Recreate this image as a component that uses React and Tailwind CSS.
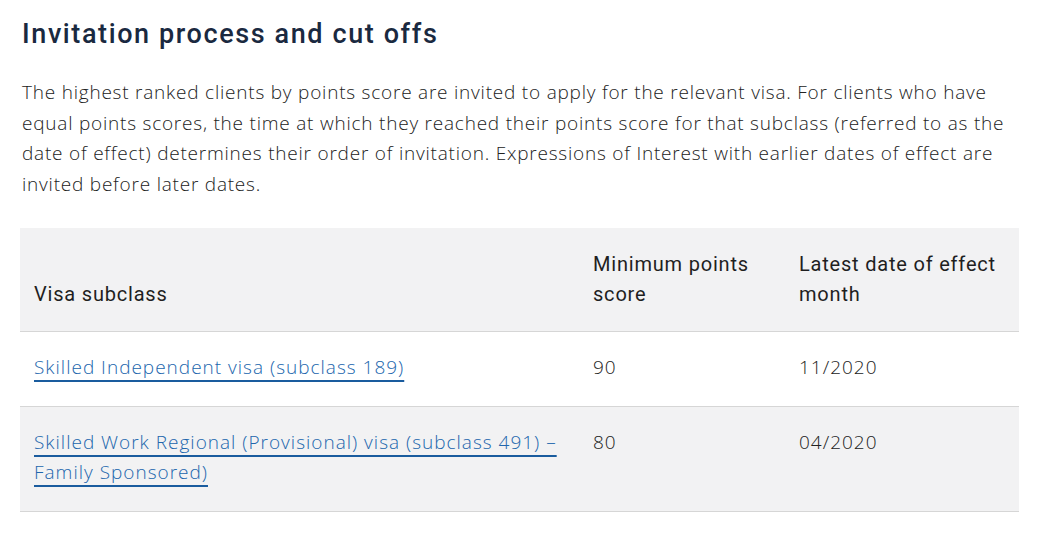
import React from 'react';

const rows = [
  { visa: 'Skilled Independent visa (subclass 189)', score: '90', date: '11/2020', shaded: false },
  {
    visa: 'Skilled Work Regional (Provisional) visa (subclass 491) – Family Sponsored)',
    score: '80',
    date: '04/2020',
    shaded: true,
  },
];

const App = () => {
  return (
    <div className="w-[1042px] h-[542px] bg-white overflow-hidden px-[20px]">
      <h2 className="pl-[2px] pt-[14px] text-[27px] leading-[40px] font-medium tracking-[1.6px] text-[#1a2940] font-['Roboto',sans-serif]">
        Invitation process and cut offs
      </h2>

      <p className="mt-[23px] pl-[2px] w-[1000px] text-[19px] leading-[30.5px] font-light tracking-[0.78px] text-[#222] font-['Open_Sans',sans-serif]">
        The highest ranked clients by points score are invited to apply for the relevant visa. For clients who have
        <br />
        equal points scores, the time at which they reached their points score for that subclass (referred to as the
        <br />
        date of effect) determines their order of invitation. Expressions of Interest with earlier dates of effect are
        <br />
        invited before later dates.
      </p>

      <table className="mt-[29px] w-[999px] border-collapse text-left">
        <thead>
          <tr className="bg-[#f2f2f3] border-b border-[#d6d6d6]">
            <th className="w-[559px] px-[14px] pt-[21px] pb-[22px] align-bottom text-[20px] leading-[30px] font-normal tracking-[0.8px] text-[#1f1f1f] font-['Roboto',sans-serif]">
              Visa subclass
            </th>
            <th className="w-[206px] px-[14px] pt-[21px] pb-[22px] align-bottom text-[20px] leading-[30px] font-normal tracking-[0.8px] text-[#1f1f1f] font-['Roboto',sans-serif]">
              Minimum points score
            </th>
            <th className="px-[14px] pt-[21px] pb-[22px] align-bottom text-[20px] leading-[30px] font-normal tracking-[0.8px] text-[#1f1f1f] font-['Roboto',sans-serif]">
              Latest date of effect month
            </th>
          </tr>
        </thead>
        <tbody className="font-['Open_Sans',sans-serif] text-[19px] leading-[30px] font-light tracking-[1px]">
          {rows.map((row, idx) => (
            <tr key={idx} className={`border-b border-[#d6d6d6] ${row.shaded ? 'bg-[#f2f2f3]' : 'bg-white'}`}>
              <td className="px-[14px] pt-[20px] pb-[24px] align-top">
                <a
                  href="#"
                  className="text-[#2166ad] underline decoration-[#1a5c9e] decoration-2 underline-offset-[6px]"
                >
                  {row.visa}
                </a>
              </td>
              <td className="px-[14px] pt-[20px] pb-[24px] align-top text-[#222]">{row.score}</td>
              <td className="px-[14px] pt-[20px] pb-[24px] align-top text-[#222]">{row.date}</td>
            </tr>
          ))}
        </tbody>
      </table>
    </div>
  );
};

export default App;
